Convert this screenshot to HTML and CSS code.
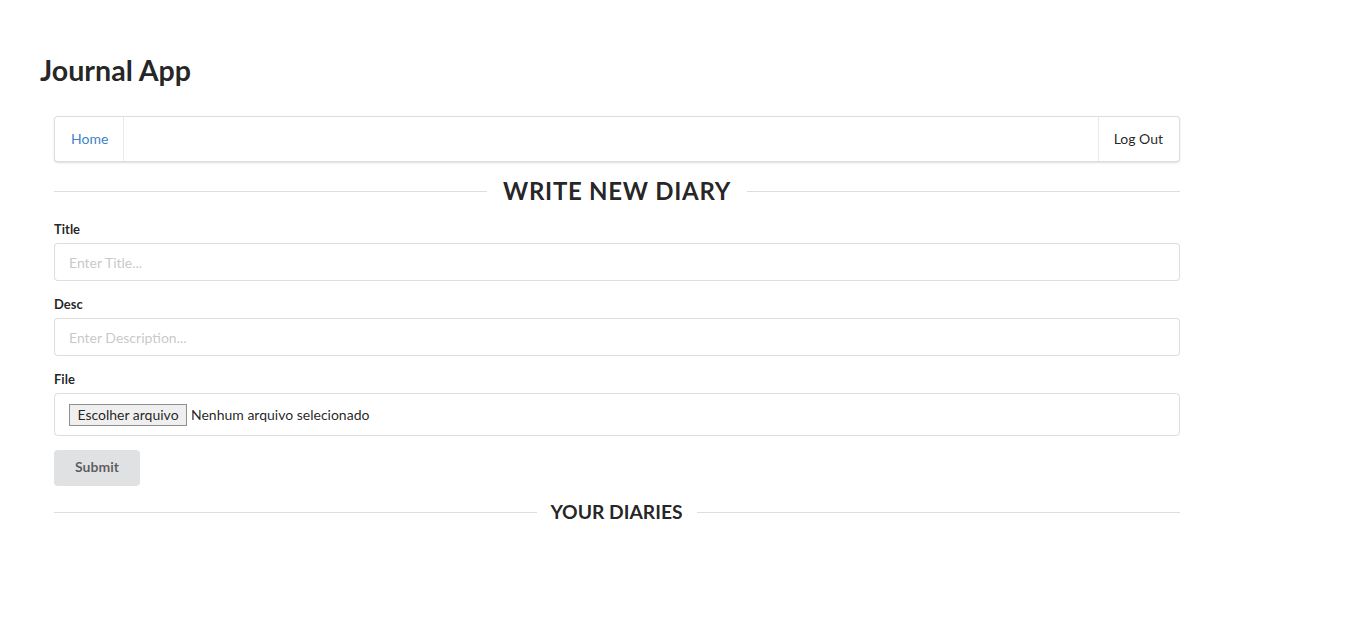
FILE: index.html
```html
<!DOCTYPE html>
<html lang="pt">
<head>
<meta charset="utf-8">
<title>Journal App</title>
<link rel="stylesheet" href="styles.css">
</head>
<body>
<div class="page">
  <h1 class="app-title">Journal App</h1>
  <div class="container">
    <nav class="menu">
      <a class="item home" href="#">Home</a>
      <div class="spacer"></div>
      <a class="item logout" href="#">Log Out</a>
    </nav>
    <div class="divider big"><span class="line"></span><h2 class="divider-text">Write New Diary</h2><span class="line"></span></div>
    <form class="form">
      <div class="field">
        <label class="label">Title</label>
        <input class="input" type="text" placeholder="Enter Title...">
      </div>
      <div class="field">
        <label class="label">Desc</label>
        <input class="input" type="text" placeholder="Enter Description...">
      </div>
      <div class="field">
        <label class="label">File</label>
        <div class="file-box">
          <span class="file-btn">Escolher arquivo</span><span class="file-name">Nenhum arquivo selecionado</span>
        </div>
      </div>
      <button class="submit" type="button">Submit</button>
    </form>
    <div class="divider small"><span class="line"></span><h3 class="divider-text">Your Diaries</h3><span class="line"></span></div>
  </div>
</div>
</body>
</html>
```
FILE: styles.css
```css
* { box-sizing: border-box; }
html, body { margin: 0; padding: 0; background: #fff; }
body {
  font-family: Lato, "Helvetica Neue", Arial, sans-serif;
  font-size: 14px;
  line-height: 1.4285em;
  color: rgba(0,0,0,.87);
}
.page { padding: 52px 40px 40px 40px; }
.app-title {
  margin: 0;
  font-size: 28.6px;
  line-height: 36px;
  font-weight: 700;
  height: 36px;
}
.container {
  width: 1126px;
  margin: 28px 0 0 14px;
}
.menu {
  display: flex;
  height: 46px;
  border: 1px solid rgba(34,36,38,.15);
  border-radius: 4px;
  box-shadow: 0 1px 2px 0 rgba(34,36,38,.15);
  background: #fff;
}
.item {
  display: flex;
  align-items: center;
  padding: 0 16px;
  text-decoration: none;
  color: rgba(0,0,0,.87);
  font-size: 14px;
}
.home { color: #4183c4; border-right: 1px solid rgba(34,36,38,.1); padding-right: 15px; }
.logout { border-left: 1px solid rgba(34,36,38,.1); padding-left: 15px; }
.spacer { flex: 1; }
.divider {
  display: flex;
  align-items: center;
}
.divider .line { flex: 1; height: 1px; background: rgba(34,36,38,.15); }
.divider-text {
  margin: 0;
  font-weight: 700;
  text-transform: uppercase;
  color: rgba(0,0,0,.87);
  padding: 0 16px;
}
.divider.big { margin-top: 15px; height: 28px; }
.divider.big .divider-text { font-size: 24px; line-height: 28px; letter-spacing: .03em; }
.divider.small { margin-top: 14px; height: 24px; }
.divider.small .divider-text { font-size: 19.3px; line-height: 24px; padding: 0 14px 0 13px; }
.form { margin-top: 15px; }
.field { margin-bottom: 14px; }
.label {
  display: block;
  font-size: 13px;
  font-weight: 700;
  line-height: 19px;
  margin-bottom: 4px;
  color: rgba(0,0,0,.87);
}
.input {
  display: block;
  width: 100%;
  height: 38px;
  padding: 0 14px;
  border: 1px solid rgba(34,36,38,.15);
  border-radius: 4px;
  font-family: Lato, "Helvetica Neue", Arial, sans-serif;
  font-size: 14px;
  color: rgba(0,0,0,.87);
  outline: none;
}
.input::placeholder { color: rgba(191,191,191,.87); }
.file-box {
  display: flex;
  align-items: center;
  height: 43px;
  padding: 0 14px;
  border: 1px solid rgba(34,36,38,.15);
  border-radius: 4px;
}
.file-btn {
  display: inline-flex;
  align-items: center;
  width: 118px;
  justify-content: center;
  height: 22px;
  padding: 0;
  background: #efefef;
  border: 1px solid #8f8f8f;
  font-size: 14px;
  color: rgba(0,0,0,.87);
}
.file-name { margin-left: 4px; font-size: 14px; }
.submit {
  display: block;
  height: 36px;
  width: 86px;
  padding: 0 0 3px 0;
  border: none;
  border-radius: 4px;
  background: #e0e1e2;
  color: rgba(0,0,0,.6);
  font-family: Lato, "Helvetica Neue", Arial, sans-serif;
  font-size: 14px;
  font-weight: 700;
}
```
